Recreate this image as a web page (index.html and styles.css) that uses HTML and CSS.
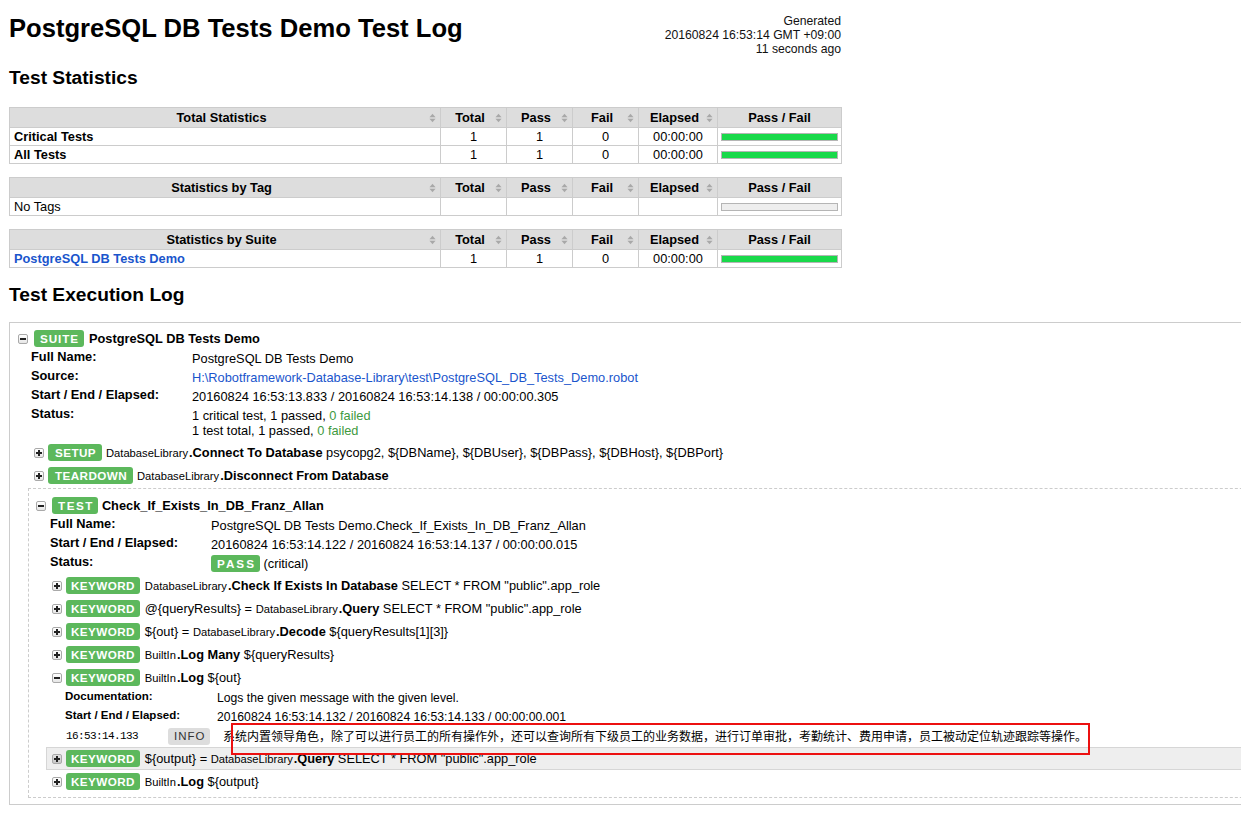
FILE: index.html
```html
<!DOCTYPE html>
<html lang="en">
<head>
<meta charset="utf-8">
<title>PostgreSQL DB Tests Demo Test Log</title>
<link rel="stylesheet" href="styles.css">
</head>
<body>
<div class="header">
  <h1>PostgreSQL DB Tests Demo Test Log</h1>
  <div class="generated">Generated<br>20160824 16:53:14 GMT +09:00<br>11 seconds ago</div>
</div>

<h2 class="h-stats">Test Statistics</h2>

<table class="statistics">
  <colgroup><col class="c-name"><col class="c-num"><col class="c-num"><col class="c-num"><col class="c-el"><col class="c-graph"></colgroup>
  <thead>
    <tr>
      <th><div class="th-in"><span class="th-t">Total Statistics</span><svg class="sort" viewBox="0 0 7 10" width="7" height="10"><polygon points="0.5,4.2 3.5,0.8 6.5,4.2"/><polygon points="0.5,5.8 3.5,9.2 6.5,5.8"/></svg></div></th>
      <th><div class="th-in"><span class="th-t">Total</span><svg class="sort" viewBox="0 0 7 10" width="7" height="10"><polygon points="0.5,4.2 3.5,0.8 6.5,4.2"/><polygon points="0.5,5.8 3.5,9.2 6.5,5.8"/></svg></div></th>
      <th><div class="th-in"><span class="th-t">Pass</span><svg class="sort" viewBox="0 0 7 10" width="7" height="10"><polygon points="0.5,4.2 3.5,0.8 6.5,4.2"/><polygon points="0.5,5.8 3.5,9.2 6.5,5.8"/></svg></div></th>
      <th><div class="th-in"><span class="th-t">Fail</span><svg class="sort" viewBox="0 0 7 10" width="7" height="10"><polygon points="0.5,4.2 3.5,0.8 6.5,4.2"/><polygon points="0.5,5.8 3.5,9.2 6.5,5.8"/></svg></div></th>
      <th><div class="th-in"><span class="th-t">Elapsed</span><svg class="sort" viewBox="0 0 7 10" width="7" height="10"><polygon points="0.5,4.2 3.5,0.8 6.5,4.2"/><polygon points="0.5,5.8 3.5,9.2 6.5,5.8"/></svg></div></th>
      <th>Pass / Fail</th>
    </tr>
  </thead>
  <tbody>
    <tr><td class="stat-name"><b>Critical Tests</b></td><td>1</td><td>1</td><td>0</td><td>00:00:00</td><td><div class="graph"><div class="pass-bar"></div></div></td></tr>
    <tr><td class="stat-name"><b>All Tests</b></td><td>1</td><td>1</td><td>0</td><td>00:00:00</td><td><div class="graph"><div class="pass-bar"></div></div></td></tr>
  </tbody>
</table>

<table class="statistics">
  <colgroup><col class="c-name"><col class="c-num"><col class="c-num"><col class="c-num"><col class="c-el"><col class="c-graph"></colgroup>
  <thead>
    <tr>
      <th><div class="th-in"><span class="th-t">Statistics by Tag</span><svg class="sort" viewBox="0 0 7 10" width="7" height="10"><polygon points="0.5,4.2 3.5,0.8 6.5,4.2"/><polygon points="0.5,5.8 3.5,9.2 6.5,5.8"/></svg></div></th>
      <th><div class="th-in"><span class="th-t">Total</span><svg class="sort" viewBox="0 0 7 10" width="7" height="10"><polygon points="0.5,4.2 3.5,0.8 6.5,4.2"/><polygon points="0.5,5.8 3.5,9.2 6.5,5.8"/></svg></div></th>
      <th><div class="th-in"><span class="th-t">Pass</span><svg class="sort" viewBox="0 0 7 10" width="7" height="10"><polygon points="0.5,4.2 3.5,0.8 6.5,4.2"/><polygon points="0.5,5.8 3.5,9.2 6.5,5.8"/></svg></div></th>
      <th><div class="th-in"><span class="th-t">Fail</span><svg class="sort" viewBox="0 0 7 10" width="7" height="10"><polygon points="0.5,4.2 3.5,0.8 6.5,4.2"/><polygon points="0.5,5.8 3.5,9.2 6.5,5.8"/></svg></div></th>
      <th><div class="th-in"><span class="th-t">Elapsed</span><svg class="sort" viewBox="0 0 7 10" width="7" height="10"><polygon points="0.5,4.2 3.5,0.8 6.5,4.2"/><polygon points="0.5,5.8 3.5,9.2 6.5,5.8"/></svg></div></th>
      <th>Pass / Fail</th>
    </tr>
  </thead>
  <tbody>
    <tr><td class="stat-name">No Tags</td><td></td><td></td><td></td><td></td><td><div class="graph empty"></div></td></tr>
  </tbody>
</table>

<table class="statistics">
  <colgroup><col class="c-name"><col class="c-num"><col class="c-num"><col class="c-num"><col class="c-el"><col class="c-graph"></colgroup>
  <thead>
    <tr>
      <th><div class="th-in"><span class="th-t">Statistics by Suite</span><svg class="sort" viewBox="0 0 7 10" width="7" height="10"><polygon points="0.5,4.2 3.5,0.8 6.5,4.2"/><polygon points="0.5,5.8 3.5,9.2 6.5,5.8"/></svg></div></th>
      <th><div class="th-in"><span class="th-t">Total</span><svg class="sort" viewBox="0 0 7 10" width="7" height="10"><polygon points="0.5,4.2 3.5,0.8 6.5,4.2"/><polygon points="0.5,5.8 3.5,9.2 6.5,5.8"/></svg></div></th>
      <th><div class="th-in"><span class="th-t">Pass</span><svg class="sort" viewBox="0 0 7 10" width="7" height="10"><polygon points="0.5,4.2 3.5,0.8 6.5,4.2"/><polygon points="0.5,5.8 3.5,9.2 6.5,5.8"/></svg></div></th>
      <th><div class="th-in"><span class="th-t">Fail</span><svg class="sort" viewBox="0 0 7 10" width="7" height="10"><polygon points="0.5,4.2 3.5,0.8 6.5,4.2"/><polygon points="0.5,5.8 3.5,9.2 6.5,5.8"/></svg></div></th>
      <th><div class="th-in"><span class="th-t">Elapsed</span><svg class="sort" viewBox="0 0 7 10" width="7" height="10"><polygon points="0.5,4.2 3.5,0.8 6.5,4.2"/><polygon points="0.5,5.8 3.5,9.2 6.5,5.8"/></svg></div></th>
      <th>Pass / Fail</th>
    </tr>
  </thead>
  <tbody>
    <tr><td class="stat-name"><a class="suite-link" href="#">PostgreSQL DB Tests Demo</a></td><td>1</td><td>1</td><td>0</td><td>00:00:00</td><td><div class="graph"><div class="pass-bar"></div></div></td></tr>
  </tbody>
</table>

<h2 class="h-log">Test Execution Log</h2>

<div class="suite">
  <div class="el-header">
    <span class="toggle"></span><span class="badge badge-suite">SUITE</span><span class="name">PostgreSQL DB Tests Demo</span>
  </div>
  <table class="meta">
    <tr><th>Full Name:</th><td>PostgreSQL DB Tests Demo</td></tr>
    <tr><th>Source:</th><td><a class="src" href="#">H:\Robotframework-Database-Library\test\PostgreSQL_DB_Tests_Demo.robot</a></td></tr>
    <tr><th>Start / End / Elapsed:</th><td>20160824 16:53:13.833 / 20160824 16:53:14.138 / 00:00:00.305</td></tr>
    <tr><th>Status:</th><td>1 critical test, 1 passed, <span class="ok">0 failed</span><br>1 test total, 1 passed, <span class="ok">0 failed</span></td></tr>
  </table>

  <div class="children">
    <div class="kw">
      <div class="el-header"><span class="toggle plus"></span><span class="badge badge-fix">SETUP</span><span class="kwname"><span class="parent">DatabaseLibrary</span><b>.Connect To Database</b> psycopg2, ${DBName}, ${DBUser}, ${DBPass}, ${DBHost}, ${DBPort}</span></div>
    </div>
    <div class="kw">
      <div class="el-header"><span class="toggle plus"></span><span class="badge badge-fix">TEARDOWN</span><span class="kwname"><span class="parent">DatabaseLibrary</span><b>.Disconnect From Database</b></span></div>
    </div>

    <div class="test">
      <div class="el-header">
        <span class="toggle"></span><span class="badge badge-test">TEST</span><span class="name">Check_If_Exists_In_DB_Franz_Allan</span>
      </div>
      <table class="meta meta-test">
        <tr><th>Full Name:</th><td>PostgreSQL DB Tests Demo.Check_If_Exists_In_DB_Franz_Allan</td></tr>
        <tr><th>Start / End / Elapsed:</th><td>20160824 16:53:14.122 / 20160824 16:53:14.137 / 00:00:00.015</td></tr>
        <tr><th>Status:</th><td><span class="badge badge-pass">PASS</span> (critical)</td></tr>
      </table>

      <div class="children">
        <div class="kw">
          <div class="el-header"><span class="toggle plus"></span><span class="badge">KEYWORD</span><span class="kwname"><span class="parent">DatabaseLibrary</span><b>.Check If Exists In Database</b> SELECT * FROM "public".app_role</span></div>
        </div>
        <div class="kw">
          <div class="el-header"><span class="toggle plus"></span><span class="badge">KEYWORD</span><span class="kwname">@{queryResults} = <span class="parent">DatabaseLibrary</span><b>.Query</b> SELECT * FROM "public".app_role</span></div>
        </div>
        <div class="kw">
          <div class="el-header"><span class="toggle plus"></span><span class="badge">KEYWORD</span><span class="kwname">${out} = <span class="parent">DatabaseLibrary</span><b>.Decode</b> ${queryResults[1][3]}</span></div>
        </div>
        <div class="kw">
          <div class="el-header"><span class="toggle plus"></span><span class="badge">KEYWORD</span><span class="kwname"><span class="parent">BuiltIn</span><b>.Log Many</b> ${queryResults}</span></div>
        </div>
        <div class="kw">
          <div class="el-header"><span class="toggle"></span><span class="badge">KEYWORD</span><span class="kwname"><span class="parent">BuiltIn</span><b>.Log</b> ${out}</span></div>
          <div class="kw-body">
            <table class="kw-meta">
              <tr><th>Documentation:</th><td>Logs the given message with the given level.</td></tr>
              <tr><th>Start / End / Elapsed:</th><td>20160824 16:53:14.132 / 20160824 16:53:14.133 / 00:00:00.001</td></tr>
            </table>
            <div class="msg-row">
              <span class="time">16:53:14.133</span>
              <span class="level"><span class="badge-info">INFO</span></span>
              <span class="msg-text">系统内置领导角色，除了可以进行员工的所有操作外，还可以查询所有下级员工的业务数据，进行订单审批，考勤统计、费用申请，员工被动定位轨迹跟踪等操作。</span>
            </div>
          </div>
        </div>
        <div class="kw kw-hover">
          <div class="el-header"><span class="toggle plus"></span><span class="badge">KEYWORD</span><span class="kwname">${output} = <span class="parent">DatabaseLibrary</span><b>.Query</b> SELECT * FROM "public".app_role</span></div>
        </div>
        <div class="kw">
          <div class="el-header"><span class="toggle plus"></span><span class="badge">KEYWORD</span><span class="kwname"><span class="parent">BuiltIn</span><b>.Log</b> ${output}</span></div>
        </div>
      </div>
    </div>
  </div>
</div>

<div class="annotation"></div>
</body>
</html>
```

FILE: styles.css
```css
html, body {
  overflow-x: hidden;
}

body {
  margin: 0;
  padding: 13px 9px 20px 9px;
  font-family: "Liberation Sans", Arial, Helvetica, sans-serif;
  font-size: 12.8px;
  color: #000;
  background: #fff;
}

a {
  text-decoration: none;
}

.header {
  display: flex;
  justify-content: space-between;
  align-items: flex-start;
  width: 832px;
}

h1 {
  margin: 0;
  font-size: 25.6px;
  line-height: 30px;
  font-weight: bold;
}

.generated {
  margin-top: 1px;
  font-size: 12.2px;
  line-height: 14px;
  text-align: right;
  white-space: nowrap;
  color: #111;
}

h2 {
  margin: 0;
  font-size: 19.2px;
  line-height: 22px;
  font-weight: bold;
}

.h-stats {
  margin: 11px 0 18px 0;
}

.h-log {
  margin: 16px 0 16px 0;
}

/* statistics tables */
.statistics {
  width: 832px;
  table-layout: fixed;
  border-collapse: collapse;
  empty-cells: show;
  margin-bottom: 13px;
}

.c-name { width: 431px; }
.c-num { width: 66px; }
.c-el { width: 79px; }
.c-graph { width: 124px; }

.statistics th {
  background: #ddd;
  border: 1px solid #ccc;
  padding: 2px 4px;
  line-height: 15px;
  font-weight: bold;
  text-align: center;
}

.statistics td {
  border: 1px solid #ccc;
  padding: 1px 4px;
  line-height: 15px;
  text-align: center;
  white-space: nowrap;
}

.statistics td.stat-name {
  text-align: left;
}

.th-in {
  display: flex;
  align-items: center;
}

.th-t {
  flex: 1;
  text-align: center;
}

.sort {
  flex: none;
  fill: #a8a8a8;
}

.suite-link {
  color: #1a55cc;
  font-weight: bold;
}

.graph {
  height: 6px;
  border: 1px solid #b5b5b5;
  background: #eee;
  margin: 0 -1px;
}

.pass-bar {
  height: 100%;
  background: #19d94a;
}

/* execution log */
.suite {
  width: 1320px;
  border: 1px solid #ccc;
  padding: 4px 0 6px 8px;
}

.el-header {
  display: flex;
  align-items: center;
  height: 23px;
  white-space: nowrap;
}

.toggle {
  flex: none;
  position: relative;
  width: 8px;
  height: 8px;
  border: 1px solid #a9a9a9;
  border-radius: 2px;
  background: linear-gradient(#fff, #e6e6e6);
  margin-right: 6px;
}

.toggle::before {
  content: "";
  position: absolute;
  left: 1px;
  top: 3px;
  width: 6px;
  height: 2px;
  background: #222;
}

.toggle.plus::after {
  content: "";
  position: absolute;
  left: 3px;
  top: 1px;
  width: 2px;
  height: 6px;
  background: #222;
}

.kw .toggle {
  margin-right: 4px;
}

.badge {
  flex: none;
  background: #5cb85c;
  color: #fff;
  font-weight: bold;
  font-size: 11.7px;
  line-height: 17px;
  letter-spacing: 0.4px;
  padding: 0 5px;
  border-radius: 3px;
  margin-right: 5px;
}

.badge-suite {
  letter-spacing: 0.9px;
  padding: 0 5px 0 6px;
}

.badge-fix {
  padding: 0 6px 0 7px;
  margin-right: 4px;
}

.badge-test {
  letter-spacing: 1.5px;
  padding: 0 4px 0 6px;
  margin-right: 4px;
}

.badge-pass {
  display: inline-block;
  vertical-align: top;
  margin: -1px 0;
  letter-spacing: 2px;
  padding: 0 4px 0 6px;
}

.name {
  font-weight: bold;
}

.kwname b {
  font-weight: bold;
}

.parent {
  font-size: 11.2px;
  margin-right: 1px;
}

.meta {
  border-collapse: collapse;
  margin: -1px 0 1px 13px;
}

.meta-test {
  margin-left: 14px;
}

.meta th {
  width: 161px;
  padding: 0 0 4px 0;
  line-height: 15px;
  text-align: left;
  vertical-align: top;
  font-weight: bold;
}

.meta td {
  padding: 2px 0;
  line-height: 15px;
  vertical-align: top;
  white-space: nowrap;
}

.src {
  color: #1a55cc;
}

.ok {
  color: #3f9a3f;
}

.children {
  margin-left: 10px;
}

.kw {
  border: 1px solid transparent;
  border-right: none;
  padding-left: 5px;
}

.kw > .el-header {
  height: 21px;
}

.kw-hover {
  background: #eee;
  border-color: #d6d6d6;
}

.kw-hover .toggle {
  background: linear-gradient(#e0e0e0, #c8c8c8);
}

.test {
  border: 1px dashed #ccc;
  border-right: none;
  padding: 5px 0 4px 7px;
  margin-top: 1px;
}

.kw-body {
  margin-left: 13px;
}

.kw-meta {
  border-collapse: collapse;
}

.kw-meta th {
  width: 152px;
  padding: 1px 0 3px 0;
  line-height: 15px;
  font-size: 11.5px;
  text-align: left;
  vertical-align: top;
  font-weight: bold;
}

.kw-meta td {
  padding: 3px 0 1px 0;
  line-height: 15px;
  font-size: 12.2px;
  vertical-align: top;
  white-space: nowrap;
}

.msg-row {
  display: flex;
  align-items: center;
  height: 20px;
  margin-left: 1px;
  white-space: nowrap;
}

.time {
  width: 102px;
  flex: none;
  font-family: "Liberation Mono", "DejaVu Sans Mono", monospace;
  font-size: 11px;
  letter-spacing: -0.6px;
}

.level {
  width: 56px;
  flex: none;
}

.badge-info {
  display: inline-block;
  background: #ddd;
  color: #333;
  font-size: 11.5px;
  line-height: 17px;
  letter-spacing: 1px;
  padding: 0 5px 0 6px;
  border-radius: 3px;
}

.msg-text {
  font-family: "Noto Sans CJK SC", "Liberation Sans", sans-serif;
  font-size: 12px;
  line-height: 16px;
  margin-left: -1px;
}

.annotation {
  position: absolute;
  left: 231px;
  top: 723px;
  width: 859px;
  height: 32px;
  box-sizing: border-box;
  border: 2px solid #ec1010;
}
```
